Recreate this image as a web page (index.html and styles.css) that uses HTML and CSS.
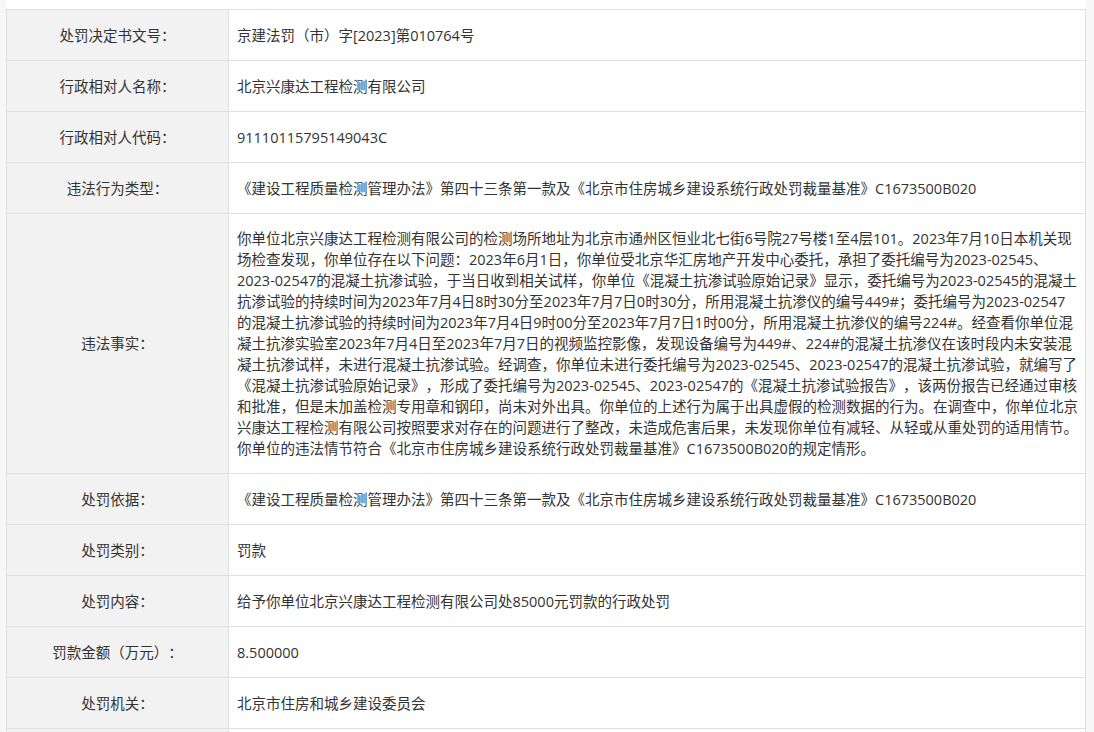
FILE: index.html
```html
<!DOCTYPE html>
<html lang="zh-CN">
<head>
<meta charset="utf-8">
<title>行政处罚信息</title>
<link rel="stylesheet" href="styles.css">
</head>
<body>
<div class="page">
  <table class="info">
    <colgroup><col class="col-label"><col class="col-value"></colgroup>
    <tbody>
      <tr><th>处罚决定书文号：</th><td>京建法罚（市）字[2023]第010764号</td></tr>
      <tr><th>行政相对人名称：</th><td>北京兴康达工程检测有限公司</td></tr>
      <tr><th>行政相对人代码：</th><td>91110115795149043C</td></tr>
      <tr><th>违法行为类型：</th><td>《建设工程质量检测管理办法》第四十三条第一款及《北京市住房城乡建设系统行政处罚裁量基准》C1673500B020</td></tr>
      <tr><th>违法事实：</th><td>你单位北京兴康达工程检测有限公司的检测场所地址为北京市通州区恒业北七街6号院27号楼1至4层101。2023年7月10日本机关现场检查发现，你单位存在以下问题：2023年6月1日，你单位受北京华汇房地产开发中心委托，承担了委托编号为2023-02545、2023-02547的混凝土抗渗试验，于当日收到相关试样，你单位《混凝土抗渗试验原始记录》显示，委托编号为2023-02545的混凝土抗渗试验的持续时间为2023年7月4日8时30分至2023年7月7日0时30分，所用混凝土抗渗仪的编号449#；委托编号为2023-02547的混凝土抗渗试验的持续时间为2023年7月4日9时00分至2023年7月7日1时00分，所用混凝土抗渗仪的编号224#。经查看你单位混凝土抗渗实验室2023年7月4日至2023年7月7日的视频监控影像，发现设备编号为449#、224#的混凝土抗渗仪在该时段内未安装混凝土抗渗试样，未进行混凝土抗渗试验。经调查，你单位未进行委托编号为2023-02545、2023-02547的混凝土抗渗试验，就编写了《混凝土抗渗试验原始记录》，形成了委托编号为2023-02545、2023-02547的《混凝土抗渗试验报告》，该两份报告已经通过审核和批准，但是未加盖检测专用章和钢印，尚未对外出具。你单位的上述行为属于出具虚假的检测数据的行为。在调查中，你单位北京兴康达工程检测有限公司按照要求对存在的问题进行了整改，未造成危害后果，未发现你单位有减轻、从轻或从重处罚的适用情节。你单位的违法情节符合《北京市住房城乡建设系统行政处罚裁量基准》C1673500B020的规定情形。</td></tr>
      <tr><th>处罚依据：</th><td>《建设工程质量检测管理办法》第四十三条第一款及《北京市住房城乡建设系统行政处罚裁量基准》C1673500B020</td></tr>
      <tr><th>处罚类别：</th><td>罚款</td></tr>
      <tr><th>处罚内容：</th><td>给予你单位北京兴康达工程检测有限公司处85000元罚款的行政处罚</td></tr>
      <tr><th>罚款金额（万元）：</th><td>8.500000</td></tr>
      <tr><th>处罚机关：</th><td>北京市住房和城乡建设委员会</td></tr>
      <tr class="spacer"><th></th><td></td></tr>
    </tbody>
  </table>
</div>
</body>
</html>
```

FILE: styles.css
```css
html, body {
  margin: 0;
  padding: 0;
}
body {
  background: #f7f7f7;
  font-family: "Open Sans", "Noto Sans CJK SC", sans-serif;
  font-size: 14.5px;
  color: #333;
  text-spacing-trim: space-all;
}
.page {
  background: #ffffff;
  margin-left: 6px;
  width: 1080px;
  padding-top: 9px;
  min-height: 732px;
}
.info {
  width: 1080px;
  border-collapse: collapse;
  table-layout: fixed;
}
.col-label {
  width: 222px;
}
.info tr {
  height: 51px;
}
.info th,
.info td {
  border: 1px solid #e0e0e0;
  padding: 14px 6px 14px 8px;
  line-height: 21px;
  vertical-align: middle;
}
.info th {
  background: #f2f2f2;
  font-weight: normal;
  text-align: center;
  padding-right: 8px;
}
.info td {
  text-align: left;
  background: #ffffff;
}
```
